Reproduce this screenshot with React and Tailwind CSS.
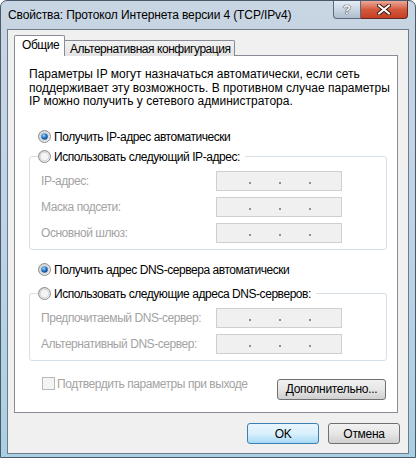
import { useState } from "react";

const font = "font-['Liberation_Sans',Arial,sans-serif]";
// подписи в Segoe UI уже, чем в Liberation Sans — подтягиваем межбуквенный
const tight = "tracking-[-0.45px] whitespace-nowrap";

// кружок радиокнопки в стиле Win7
const Radio = ({ checked, id }) => (
  <svg width="13" height="13" viewBox="0 0 13 13" className="shrink-0">
    <defs>
      <linearGradient id={`rb-${id}`} x1="0" y1="0" x2="1" y2="1">
        <stop offset="0" stopColor="#c9c9c9" />
        <stop offset="1" stopColor="#f8f8f8" />
      </linearGradient>
      <radialGradient id={`rd-${id}`} cx="0.4" cy="0.35" r="0.7">
        <stop offset="0" stopColor="#9fdcff" />
        <stop offset="0.5" stopColor="#2a78c6" />
        <stop offset="1" stopColor="#0f3e78" />
      </radialGradient>
    </defs>
    <circle cx="6.5" cy="6.5" r="6" fill={`url(#rb-${id})`} stroke="#8f8f8f" />
    <circle cx="6.5" cy="6.5" r="4.3" fill="#f4f4f4" stroke="#d2d2d2" strokeWidth="0.8" />
    {checked && <circle cx="6.5" cy="6.5" r="3.3" fill={`url(#rd-${id})`} />}
  </svg>
);

const IpBox = () => (
  <div className="w-[126px] h-[20px] border border-[#cfcfcf] bg-[#f0f0f0] flex items-end pb-[6px] pl-[32px] gap-[28px]">
    <span className="w-[2px] h-[2px] bg-[#8c8ca6]" />
    <span className="w-[2px] h-[2px] bg-[#8c8ca6]" />
    <span className="w-[2px] h-[2px] bg-[#8c8ca6]" />
  </div>
);

const Field = ({ label }) => (
  <div className="flex items-center h-[20px] pl-[3px]">
    <div className={`w-[175px] text-[#a3a3a3] ${tight}`}>{label}</div>
    <IpBox />
  </div>
);

const Group = ({ id, title, fields }) => (
  <fieldset className="ml-[14px] mr-[10px] border border-[#d5dfe5] rounded-[3px] px-[8px]">
    <legend className="h-[16px] flex items-center gap-[3px] pr-[5px]">
      <Radio id={id} />
      <span className={`leading-[16px] ${tight}`}>{title}</span>
    </legend>
    <div className="flex flex-col gap-[6px] pt-[6px] pb-[6px]">
      {fields.map((f) => (
        <Field key={f} label={f} />
      ))}
    </div>
  </fieldset>
);

const WinButton = ({ children, def, className }) => (
  <button
    type="button"
    className={
      "h-[21px] rounded-[3px] border text-[12px] leading-none text-black tracking-[-0.3px] " +
      (def
        ? "border-[#3c7fb1] bg-gradient-to-b from-[#eaf6fd] via-[#d9f0fc] to-[#a7d9f5] "
        : "border-[#707070] bg-gradient-to-b from-[#f2f2f2] via-[#e6e6e6] to-[#d0d0d0] ") +
      className
    }
  >
    {children}
  </button>
);

export default function App() {
  const [tab] = useState(0);

  return (
    <div className={`${font} text-[12px] text-black w-[416px] h-[458px] overflow-hidden`}>
      <div className="w-[416px] h-[458px] rounded-t-[7px] border border-[#4a5a6c] bg-gradient-to-b from-[#c8d5e2] via-[#bfd3e8] to-[#a9d0e2] flex flex-col">
        {/* заголовок */}
        <div className="h-[28px] flex items-start shrink-0">
          <div className="pl-[7px] pt-[6px] leading-[16px] text-[12px] text-black tracking-[-0.12px] whitespace-nowrap">
            Свойства: Протокол Интернета версии 4 (TCP/IPv4)
          </div>
          <div className="ml-auto mr-[7px] flex">
            <div className="w-[28px] h-[18px] rounded-bl-[4px] border border-t-0 border-[#5b6b7d] bg-gradient-to-b from-[#e4ecf4] via-[#c9d6e3] to-[#aebdcd] flex items-center justify-center">
              <span className="font-bold text-[13px] leading-none text-white [text-shadow:0_0_1px_#222,0_0_1px_#222]">?</span>
            </div>
            <div className="w-[47px] h-[18px] rounded-br-[4px] border border-t-0 border-l-0 border-[#5c2b25] bg-gradient-to-b from-[#e9a99b] via-[#d4583d] to-[#c43e23] flex items-center justify-center">
              <svg width="14" height="11" viewBox="0 0 14 11">
                <path d="M2 1.5 L12 9.5 M12 1.5 L2 9.5" stroke="#3b1510" strokeWidth="4" strokeLinecap="round" />
                <path d="M2 1.5 L12 9.5 M12 1.5 L2 9.5" stroke="#fff" strokeWidth="2.2" strokeLinecap="round" />
              </svg>
            </div>
          </div>
        </div>

        {/* клиентская область */}
        <div className="mx-[6px] h-[425px] shrink-0 border border-[#6f7b88] bg-[#f0f0f0] flex flex-col">
          {/* вкладки */}
          <div className="flex items-end h-[21px] mt-[5px] ml-[6px] relative z-10">
            <div className={`w-[51px] h-[21px] border border-b-0 border-[#898c95] rounded-t-[2px] bg-white pl-[7px] leading-[19px] ${tight}`}>
              {tab === 0 && "Общие"}
            </div>
            <div className={`w-[170px] h-[16px] border border-l-0 border-b-0 border-[#898c95] rounded-tr-[2px] bg-gradient-to-b from-[#f2f2f2] to-[#e3e3e3] pl-[5px] leading-[16px] ${tight}`}>
              Альтернативная конфигурация
            </div>
          </div>

          {/* панель вкладки */}
          <div className="-mt-[1px] ml-[6px] w-[384px] h-[358px] border border-[#898c95] bg-white flex flex-col">
            <p className="pl-[14px] pt-[12px] leading-[13.5px]">
              Параметры IP могут назначаться автоматически, если сеть
              <br />
              поддерживает эту возможность. В противном случае параметры
              <br />
              IP можно получить у сетевого администратора.
            </p>

            <div className="mt-[20px] ml-[23px] h-[16px] flex items-center gap-[3px]">
              <Radio id="r1" checked />
              <span className={tight}>Получить IP-адрес автоматически</span>
            </div>

            <div className="mt-[4px]">
              <Group
                id="r2"
                title="Использовать следующий IP-адрес:"
                fields={["IP-адрес:", "Маска подсети:", "Основной шлюз:"]}
              />
            </div>

            <div className="mt-[12px] ml-[23px] h-[16px] flex items-center gap-[3px]">
              <Radio id="r3" checked />
              <span className={tight}>Получить адрес DNS-сервера автоматически</span>
            </div>

            <div className="mt-[8px]">
              <Group
                id="r4"
                title="Использовать следующие адреса DNS-серверов:"
                fields={["Предпочитаемый DNS-сервер:", "Альтернативный DNS-сервер:"]}
              />
            </div>

            <div className="mt-[15px] flex items-start">
              <div className="ml-[27px] h-[16px] flex items-center gap-[2px]">
                <span className="w-[13px] h-[13px] border border-[#b8b8b8] bg-[#f4f4f4]" />
                <span className={`text-[#a3a3a3] ${tight}`}>Подтвердить параметры при выходе</span>
              </div>
              <WinButton className="ml-auto mr-[11px] mt-[3px] w-[109px]">Дополнительно...</WinButton>
            </div>
          </div>

          {/* кнопки диалога */}
          <div className="mt-[10px] mr-[8px] flex justify-end gap-[9px]">
            <WinButton def className="w-[72px]">OK</WinButton>
            <WinButton className="w-[72px]">Отмена</WinButton>
          </div>
        </div>
      </div>
    </div>
  );
}
